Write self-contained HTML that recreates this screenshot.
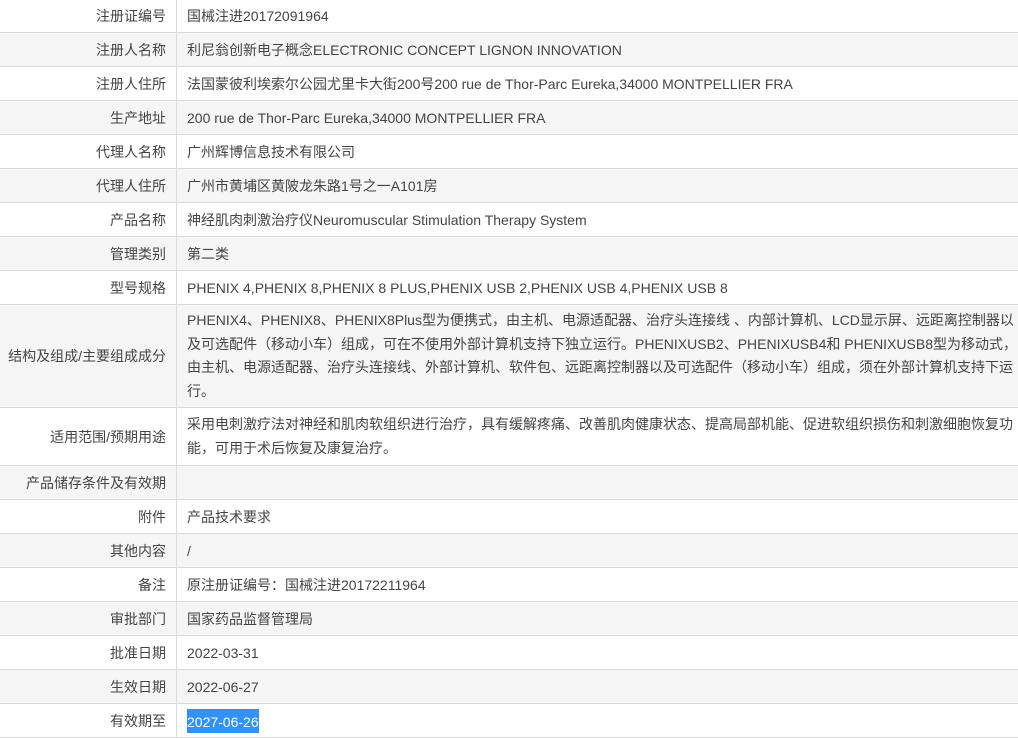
<!DOCTYPE html>
<html><head><meta charset="utf-8"><style>
html,body{margin:0;padding:0;background:#fff;overflow:hidden;width:1018px;height:731px}
table{border-collapse:collapse;width:1030px;position:absolute;top:-2px;left:0;font-family:"Liberation Sans","Noto Sans CJK SC",sans-serif;font-size:14px;color:#444}
td{border-top:1px solid #dcdcdc;border-bottom:1px solid #dcdcdc;padding:0;height:33px;vertical-align:middle;white-space:nowrap}
td.l{width:166px;text-align:right;padding-right:10px;border-right:1px solid #dcdcdc}
td.v{padding-left:10px}
tr:nth-child(even) td{background:#f5f5f5}
td.m{line-height:23.5px;padding-top:4px;padding-bottom:4px}
.sel{background:#3390ff;color:#fff;display:inline-block;line-height:22px;padding-top:2px}
</style></head><body>
<table>
<tr><td class="l">注册证编号</td><td class="v">国械注进20172091964</td></tr>
<tr><td class="l">注册人名称</td><td class="v">利尼翁创新电子概念ELECTRONIC CONCEPT LIGNON INNOVATION</td></tr>
<tr><td class="l">注册人住所</td><td class="v">法国蒙彼利埃索尔公园尤里卡大街200号200 rue de Thor-Parc Eureka,34000 MONTPELLIER FRA</td></tr>
<tr><td class="l">生产地址</td><td class="v">200 rue de Thor-Parc Eureka,34000 MONTPELLIER FRA</td></tr>
<tr><td class="l">代理人名称</td><td class="v">广州辉博信息技术有限公司</td></tr>
<tr><td class="l">代理人住所</td><td class="v">广州市黄埔区黄陂龙朱路1号之一A101房</td></tr>
<tr><td class="l">产品名称</td><td class="v">神经肌肉刺激治疗仪Neuromuscular Stimulation Therapy System</td></tr>
<tr><td class="l">管理类别</td><td class="v">第二类</td></tr>
<tr><td class="l">型号规格</td><td class="v">PHENIX 4,PHENIX 8,PHENIX 8 PLUS,PHENIX USB 2,PHENIX USB 4,PHENIX USB 8</td></tr>
<tr><td class="l">结构及组成/主要组成成分</td><td class="v m">PHENIX4、PHENIX8、PHENIX8Plus型为便携式，由主机、电源适配器、治疗头连接线 、内部计算机、LCD显示屏、远距离控制器以<br>及可选配件（移动小车）组成，可在不使用外部计算机支持下独立运行。PHENIXUSB2、PHENIXUSB4和 PHENIXUSB8型为移动式，<br>由主机、电源适配器、治疗头连接线、外部计算机、软件包、远距离控制器以及可选配件（移动小车）组成，须在外部计算机支持下运<br>行。</td></tr>
<tr><td class="l">适用范围/预期用途</td><td class="v m" style="padding-top:5px;padding-bottom:5px">采用电刺激疗法对神经和肌肉软组织进行治疗，具有缓解疼痛、改善肌肉健康状态、提高局部机能、促进软组织损伤和刺激细胞恢复功<br>能，可用于术后恢复及康复治疗。</td></tr>
<tr><td class="l">产品储存条件及有效期</td><td class="v"></td></tr>
<tr><td class="l">附件</td><td class="v">产品技术要求</td></tr>
<tr><td class="l">其他内容</td><td class="v">/</td></tr>
<tr><td class="l">备注</td><td class="v">原注册证编号：国械注进20172211964</td></tr>
<tr><td class="l">审批部门</td><td class="v">国家药品监督管理局</td></tr>
<tr><td class="l">批准日期</td><td class="v">2022-03-31</td></tr>
<tr><td class="l">生效日期</td><td class="v">2022-06-27</td></tr>
<tr><td class="l">有效期至</td><td class="v"><span class="sel">2027-06-26</span></td></tr>
</table>
</body></html>
